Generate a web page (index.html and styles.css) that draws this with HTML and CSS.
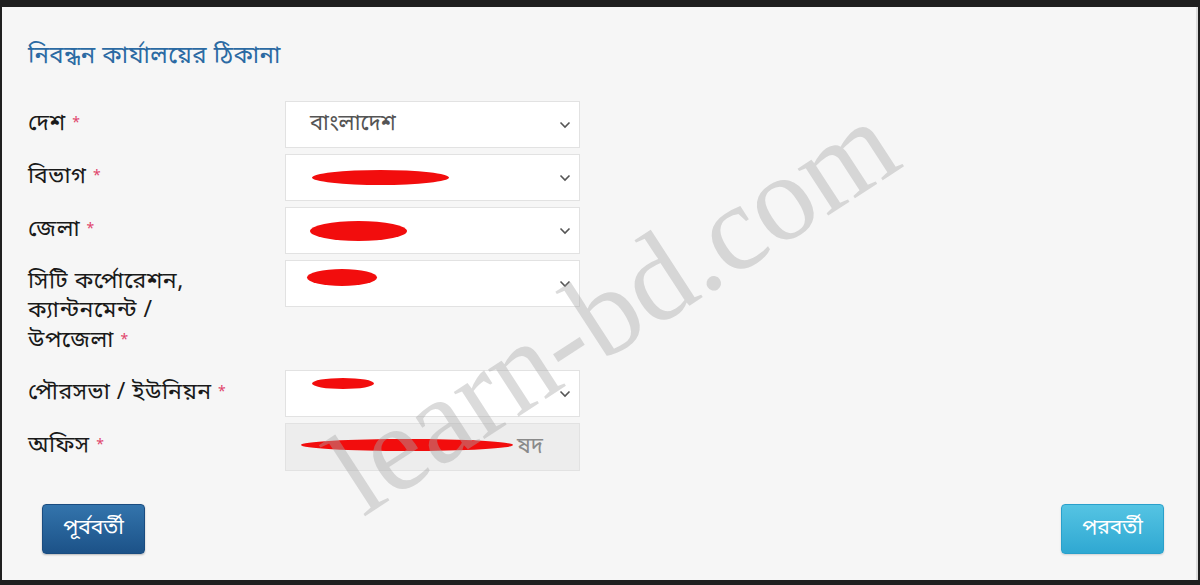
FILE: index.html
```html
<!DOCTYPE html>
<html lang="bn">
<head>
<meta charset="utf-8">
<title>নিবন্ধন কার্যালয়ের ঠিকানা</title>
<link rel="stylesheet" href="styles.css">
</head>
<body>
<div class="frame">
  <h2 class="title">নিবন্ধন কার্যালয়ের ঠিকানা</h2>
  <div class="form">
    <div class="label">দেশ <span class="req">*</span></div>
    <div class="select"><span class="val">বাংলাদেশ</span><svg class="chev" viewBox="0 0 12 8"><path d="M1.5 1.5 L6 6 L10.5 1.5"/></svg></div>

    <div class="label">বিভাগ <span class="req">*</span></div>
    <div class="select"><span class="blob b2"></span><svg class="chev" viewBox="0 0 12 8"><path d="M1.5 1.5 L6 6 L10.5 1.5"/></svg></div>

    <div class="label">জেলা <span class="req">*</span></div>
    <div class="select"><span class="blob b3"></span><svg class="chev" viewBox="0 0 12 8"><path d="M1.5 1.5 L6 6 L10.5 1.5"/></svg></div>

    <div class="label multi">সিটি কর্পোরেশন,<br>ক্যান্টনমেন্ট /<br>উপজেলা <span class="req">*</span></div>
    <div class="select"><span class="blob b4"></span><svg class="chev" viewBox="0 0 12 8"><path d="M1.5 1.5 L6 6 L10.5 1.5"/></svg></div>

    <div class="label">পৌরসভা / ইউনিয়ন <span class="req">*</span></div>
    <div class="select"><span class="blob b5"></span><svg class="chev" viewBox="0 0 12 8"><path d="M1.5 1.5 L6 6 L10.5 1.5"/></svg></div>

    <div class="label">অফিস <span class="req">*</span></div>
    <div class="select disabled"><span class="blob b6"></span><span class="val faint">ষদ</span></div>
  </div>
  <div class="actions">
    <button class="btn prev">পূর্ববর্তী</button>
    <button class="btn next">পরবর্তী</button>
  </div>
  <div class="watermark">learn-bd.com</div>
</div>
</body>
</html>
```
FILE: styles.css
```css
html, body {
  margin: 0;
  padding: 0;
  background: #1f1f1f;
}
body {
  width: 1200px;
  height: 585px;
  overflow: hidden;
  font-family: "Noto Sans Bengali", "Noto Serif Bengali", "Lohit Bengali", "FreeSans", "Noto Sans", sans-serif;
}
.frame {
  position: relative;
  box-sizing: border-box;
  margin-top: 7px;
  margin-left: 2px;
  width: 1196px;
  height: 573px;
  background: #f6f6f6;
  border-right: 2px solid #dcdcdc;
  padding: 36px 32px 0 26px;
  overflow: hidden;
}
.title {
  margin: 0 0 30px 0;
  font-weight: normal;
  font-size: 24px;
  letter-spacing: 0.4px;
  line-height: 28px;
  color: #2b6aa3;
}
.form {
  display: grid;
  grid-template-columns: 257px 295px;
  row-gap: 6px;
}
.label {
  font-size: 23px;
  letter-spacing: 0.5px;
  line-height: 29px;
  color: #1a1a1a;
  padding-top: 8px;
}
.label.multi {
  padding-bottom: 8px;
}
.req {
  color: #e0446a;
  font-size: 14px;
  vertical-align: 3px;
}
.select {
  box-sizing: border-box;
  height: 47px;
  background: #ffffff;
  border: 1px solid #e2e2e2;
  display: flex;
  align-items: center;
  padding: 0 8px 0 24px;
}
.select.disabled {
  background: #ededed;
  height: 48px;
  padding-left: 15px;
}
.val {
  flex: 1;
  font-size: 22px;
  color: #555;
}
.val.faint {
  color: #8a8a8a;
  margin-left: 4px;
}
.chev {
  margin-left: auto;
  width: 12px;
  height: 8px;
  fill: none;
  stroke: #555;
  stroke-width: 1.6;
}
.blob {
  display: inline-block;
  background: #f20d0d;
  border-radius: 50%;
}
.b2 { width: 137px; height: 15px; margin-left: 2px; }
.b3 { width: 97px; height: 20px; }
.b4 { width: 70px; height: 17px; margin-left: -3px; margin-top: -12px; }
.b5 { width: 62px; height: 11px; margin-left: 2px; margin-top: -20px; }
.b6 { width: 212px; height: 12px; margin-top: -4px; }
.actions {
  display: flex;
  justify-content: space-between;
  margin-top: 33px;
  padding-left: 14px;
}
.btn {
  width: 103px;
  height: 50px;
  border-radius: 4px;
  color: #ffffff;
  font-family: inherit;
  font-size: 21px;
  border: 1px solid transparent;
  padding: 0;
}
.btn.prev {
  background: linear-gradient(#3374ac, #1c5288);
  border-color: #1a4c80;
  box-shadow: 0 1px 2px rgba(0,0,0,0.25);
}
.btn.next {
  background: linear-gradient(#55c4e3, #2fa8d2);
  border-color: #2aa0cb;
  box-shadow: 0 1px 2px rgba(0,0,0,0.15);
}
.watermark {
  position: absolute;
  left: 610px;
  top: 300px;
  transform: translate(-50%, -50%) rotate(-33deg);
  font-family: "Liberation Serif", serif;
  font-size: 122px;
  color: rgba(170, 170, 170, 0.42);
  white-space: nowrap;
  pointer-events: none;
  line-height: 1;
}
```
